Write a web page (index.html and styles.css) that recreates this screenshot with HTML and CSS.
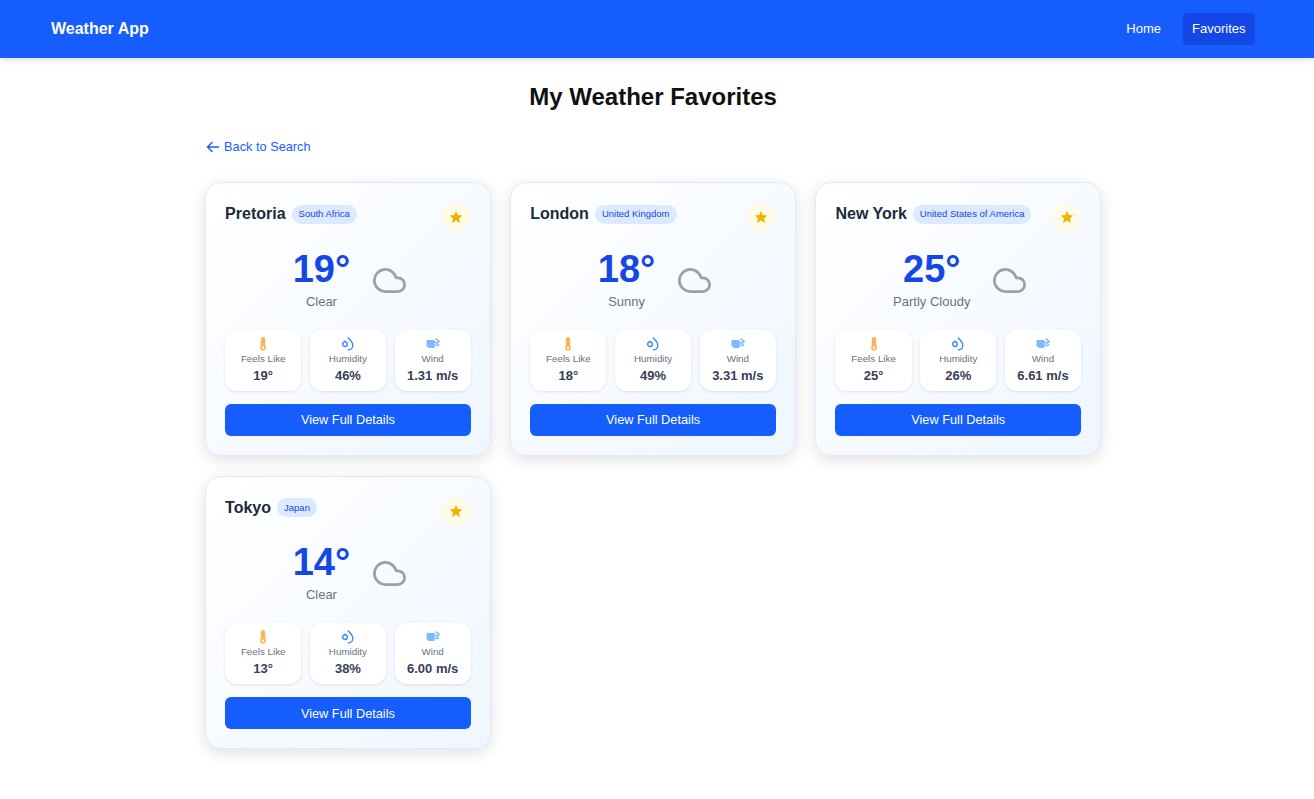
FILE: index.html
```html
<!DOCTYPE html>
<html lang="en">
<head>
<meta charset="utf-8">
<title>Weather App</title>
<link rel="stylesheet" href="styles.css">
</head>
<body>
<svg class="defs" width="0" height="0" aria-hidden="true">
  <symbol id="i-cloud" viewBox="0 0 24 24"><path d="M18 10h-1.26A8 8 0 1 0 9 20h9a5 5 0 0 0 0-10z" fill="none" stroke="currentColor" stroke-width="2" stroke-linecap="round" stroke-linejoin="round"/></symbol>
  <symbol id="i-star" viewBox="0 0 24 24"><path d="M12 1.5l3.2 7.1 7.6.8-5.7 5.1 1.6 7.6L12 18.2l-6.7 3.9 1.6-7.6-5.7-5.1 7.6-.8z" fill="currentColor"/></symbol>
  <symbol id="i-temp" viewBox="0 0 14 14"><path d="M4.8 2.2a2.2 2.2 0 0 1 4.4 0V8l.6 1v2.6a2 2 0 0 1-2 2H6.2a2 2 0 0 1-2-2V9l.6-1z" fill="currentColor"/><rect x="5.9" y="9.6" width="2.2" height="2.4" fill="#fff"/></symbol>
  <symbol id="i-drop" viewBox="0 0 14 14"><path d="M7.2 1c2.7 2.4 4.6 4.8 4.6 7.2a4 4 0 0 1-4.6 4.6" fill="none" stroke="currentColor" stroke-width="1.2" stroke-linecap="round"/><circle cx="4" cy="7.2" r="2.3" fill="none" stroke="currentColor" stroke-width="1.3"/><path d="M4 3.4v1.6" stroke="currentColor" stroke-width="1.2"/></symbol>
  <symbol id="i-wind" viewBox="0 0 14 14"><path d="M.5 3h8v1.8H11v1.4H8.5v1.2H11v1.4H8.5V11H3L.5 9z" fill="currentColor"/><path d="M9.6 1.6l3.6 2.8-2.8 2.4M10.6 9.2l2.6-1.8" fill="none" stroke="currentColor" stroke-width="1.4"/></symbol>
</svg>
<div class="page">
  <nav class="navbar">
    <a class="brand">Weather App</a>
    <div class="nav-links">
      <a class="nav-link">Home</a>
      <a class="nav-link active">Favorites</a>
    </div>
  </nav>
  <main class="content">
    <h1 class="title">My Weather Favorites</h1>
    <a class="back"><svg class="back-icon" viewBox="0 0 14 14"><path d="M13 7H1.5M6.5 2L1.5 7l5 5" fill="none" stroke="currentColor" stroke-width="1.4"/></svg>Back to Search</a>
    <div class="grid">

      <article class="card">
        <header class="card-head">
          <div class="place"><h2 class="city">Pretoria</h2><span class="badge">South Africa</span></div>
          <span class="fav"><svg class="star"><use href="#i-star"/></svg></span>
        </header>
        <div class="now">
          <div class="reading"><div class="temp">19°</div><div class="cond">Clear</div></div>
          <svg class="cloud"><use href="#i-cloud"/></svg>
        </div>
        <div class="stats">
          <div class="stat"><svg class="stat-icon orange"><use href="#i-temp"/></svg><div class="label">Feels Like</div><div class="value">19°</div></div>
          <div class="stat"><svg class="stat-icon blue"><use href="#i-drop"/></svg><div class="label">Humidity</div><div class="value">46%</div></div>
          <div class="stat"><svg class="stat-icon sky"><use href="#i-wind"/></svg><div class="label">Wind</div><div class="value">1.31 m/s</div></div>
        </div>
        <button class="details">View Full Details</button>
      </article>

      <article class="card">
        <header class="card-head">
          <div class="place"><h2 class="city">London</h2><span class="badge">United Kingdom</span></div>
          <span class="fav"><svg class="star"><use href="#i-star"/></svg></span>
        </header>
        <div class="now">
          <div class="reading"><div class="temp">18°</div><div class="cond">Sunny</div></div>
          <svg class="cloud"><use href="#i-cloud"/></svg>
        </div>
        <div class="stats">
          <div class="stat"><svg class="stat-icon orange"><use href="#i-temp"/></svg><div class="label">Feels Like</div><div class="value">18°</div></div>
          <div class="stat"><svg class="stat-icon blue"><use href="#i-drop"/></svg><div class="label">Humidity</div><div class="value">49%</div></div>
          <div class="stat"><svg class="stat-icon sky"><use href="#i-wind"/></svg><div class="label">Wind</div><div class="value">3.31 m/s</div></div>
        </div>
        <button class="details">View Full Details</button>
      </article>

      <article class="card">
        <header class="card-head">
          <div class="place"><h2 class="city">New York</h2><span class="badge">United States of America</span></div>
          <span class="fav"><svg class="star"><use href="#i-star"/></svg></span>
        </header>
        <div class="now">
          <div class="reading"><div class="temp">25°</div><div class="cond">Partly Cloudy</div></div>
          <svg class="cloud"><use href="#i-cloud"/></svg>
        </div>
        <div class="stats">
          <div class="stat"><svg class="stat-icon orange"><use href="#i-temp"/></svg><div class="label">Feels Like</div><div class="value">25°</div></div>
          <div class="stat"><svg class="stat-icon blue"><use href="#i-drop"/></svg><div class="label">Humidity</div><div class="value">26%</div></div>
          <div class="stat"><svg class="stat-icon sky"><use href="#i-wind"/></svg><div class="label">Wind</div><div class="value">6.61 m/s</div></div>
        </div>
        <button class="details">View Full Details</button>
      </article>

      <article class="card">
        <header class="card-head">
          <div class="place"><h2 class="city">Tokyo</h2><span class="badge">Japan</span></div>
          <span class="fav"><svg class="star"><use href="#i-star"/></svg></span>
        </header>
        <div class="now">
          <div class="reading"><div class="temp">14°</div><div class="cond">Clear</div></div>
          <svg class="cloud"><use href="#i-cloud"/></svg>
        </div>
        <div class="stats">
          <div class="stat"><svg class="stat-icon orange"><use href="#i-temp"/></svg><div class="label">Feels Like</div><div class="value">13°</div></div>
          <div class="stat"><svg class="stat-icon blue"><use href="#i-drop"/></svg><div class="label">Humidity</div><div class="value">38%</div></div>
          <div class="stat"><svg class="stat-icon sky"><use href="#i-wind"/></svg><div class="label">Wind</div><div class="value">6.00 m/s</div></div>
        </div>
        <button class="details">View Full Details</button>
      </article>

    </div>
  </main>
</div>
</body>
</html>
```
FILE: styles.css
```css
* { box-sizing: border-box; }
html, body { margin: 0; padding: 0; background: #fff; }
body { font-family: "Liberation Sans", Arial, sans-serif; color: #101828; overflow: hidden; }
.defs { display: block; height: 0; }
.page { min-height: 799px; }
.navbar {
  height: 58px;
  background: #155dfc;
  box-shadow: 0 2px 6px rgba(0,0,0,.12);
  display: flex;
  align-items: center;
  justify-content: space-between;
  padding: 0 59px 0 51px;
}
.brand { color: #fff; font-size: 16px; font-weight: 700; }
.nav-links { display: flex; gap: 4px; align-items: center; }
.nav-link { color: #fff; font-size: 13px; line-height: 20px; padding: 6px 9.5px; border-radius: 4px; height: 32px; }
.nav-link + .nav-link { margin-left: 8px; }
.active { background: #1447e6; }
.content { width: 896px; margin-left: 205.1px; }
.title { margin: 25px 0 0; font-size: 24px; line-height: 28px; font-weight: 700; text-align: center; color: #101010; }
.back { display: flex; align-items: center; gap: 4px; margin-top: 28px; color: #155dfc; font-size: 12.75px; line-height: 16px; width: max-content; }
.back-icon { width: 14px; height: 14px; margin-left: 1px; }
.grid { display: grid; grid-template-columns: repeat(3, 1fr); gap: 20px 19.5px; margin-top: 27px; }
.card {
  border: 1px solid #dbeafe;
  border-radius: 16px;
  padding: 19px;
  background: linear-gradient(135deg, #fff, #eff6ff);
  box-shadow: 0 4px 16px rgba(0,0,0,.12);
}
.card-head { display: flex; justify-content: space-between; align-items: flex-start; }
.place { display: flex; align-items: center; gap: 6px; margin-top: 2px; }
.city { margin: 0; font-size: 16px; line-height: 20px; font-weight: 700; color: #1e2939; }
.badge { font-size: 9.5px; line-height: 12px; padding: 3.5px 7px; border-radius: 999px; background: #dbeafe; color: #1447e6; }
.fav { width: 28px; height: 28px; border-radius: 50%; background: #fefce8; display: flex; align-items: center; justify-content: center; margin-top: 1px; margin-right: .5px; }
.star { width: 14px; height: 14px; color: #f0b100; }
.now { display: flex; justify-content: center; align-items: center; margin-top: 15.5px; gap: 23px; padding-left: 3px; }
.reading { text-align: center; }
.temp { font-size: 38px; line-height: 45px; font-weight: 700; color: #1447e6; }
.cond { font-size: 13px; line-height: 19.5px; color: #6a7282; }
.cloud { width: 33px; height: 33px; color: #99a1af; margin-top: 2.5px; }
.stats { display: grid; grid-template-columns: repeat(3, 1fr); gap: 8.5px; margin-top: 18.5px; }
.stat { height: 61px; background: #fff; border-radius: 12px; box-shadow: 0 1px 3px rgba(0,0,0,.1); text-align: center; padding-top: 7px; }
.stat-icon { display: block; width: 14px; height: 14px; margin: 0 auto; }
.orange { color: #ff8904; opacity: .65; }
.blue { color: #2b7fff; }
.sky { color: #51a2ff; opacity: .75; }
.label { font-size: 9.8px; line-height: 12px; margin-top: 2px; color: #6a7282; }
.value { font-size: 13px; line-height: 17px; font-weight: 700; color: #364153; margin-top: 2px; }
.details { display: block; width: 100%; height: 32px; margin-top: 13px; border: 0; border-radius: 6px; background: #155dfc; color: #fff; font: 12.75px "Liberation Sans", Arial, sans-serif; }
```
